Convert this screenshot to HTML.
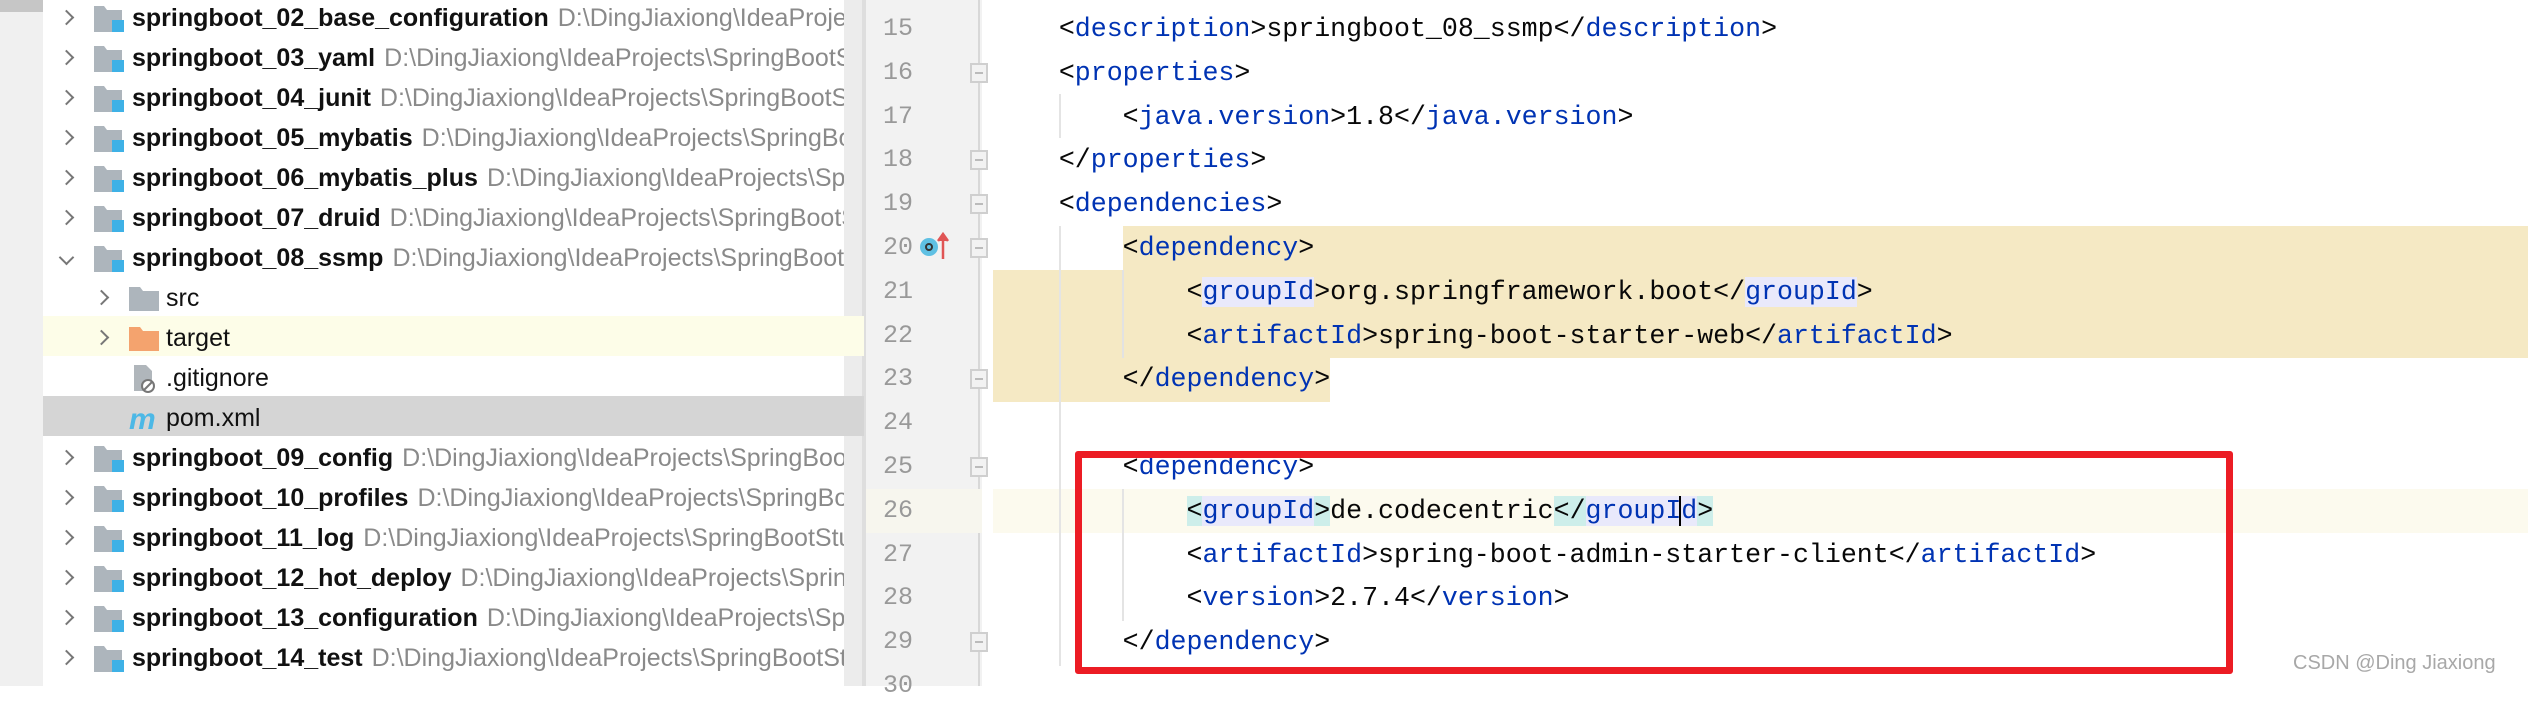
<!DOCTYPE html>
<html><head><meta charset="utf-8"><style>
*{margin:0;padding:0;box-sizing:border-box}
body{width:2528px;height:686px;overflow:hidden;background:#fff;position:relative;font-family:"Liberation Sans",sans-serif}
.abs{position:absolute}
.tr{position:absolute;left:43px;width:821px;height:40px;line-height:40px;font-size:25px;white-space:nowrap;overflow:hidden}
.tr b{color:#111}
.tr .p{color:#8a8a8a;font-weight:normal;margin-left:9px}
.chev{position:absolute;width:11px;height:11px;border-right:2px solid #777;border-bottom:2px solid #777}
.ln{position:absolute;left:850px;width:63px;text-align:right;font-family:"Liberation Mono",monospace;font-size:25px;color:#999;height:44px;line-height:44px}
.code{position:absolute;left:995px;font-family:"Liberation Mono",monospace;font-size:26.6px;height:44px;line-height:44px;white-space:pre;color:#080808}
.t{color:#0033b3}
.lv{background:#e9e9fb}
.cy{background:#cdeeea}
.fold{position:absolute;left:970px;width:18px;height:20px;border:2px solid #cfcfcf;background:#f2f2f2}
</style></head><body>
<div class="abs" style="left:0;top:0;width:43px;height:686px;background:#f0f0f0"></div>
<div class="abs" style="left:0;top:0;width:43px;height:12px;background:#c6c6c6"></div>
<div class="abs" style="left:844px;top:0;width:20px;height:686px;background:#ececec"></div>
<div class="abs" style="left:862px;top:0;width:4px;height:686px;background:#dedede"></div>
<div class="abs" style="left:866px;top:0;width:116px;height:686px;background:#f2f2f2"></div>
<div class="abs" style="left:978px;top:0;width:2px;height:686px;background:#d8d8d8"></div>

<div class="abs" style="left:43px;top:316px;width:821px;height:40px;background:#fdfde8"></div>
<div class="abs" style="left:43px;top:396px;width:821px;height:40px;background:#d5d5d5"></div>

<div id="tree"></div>

<div class="abs" style="left:1123px;top:226px;width:1405px;height:44px;background:#f5e9c4"></div>
<div class="abs" style="left:993px;top:270px;width:1535px;height:88px;background:#f5e9c4"></div>
<div class="abs" style="left:993px;top:358px;width:337px;height:44px;background:#f5e9c4"></div>
<div class="abs" style="left:866px;top:489px;width:116px;height:44px;background:#f7f6ee"></div>
<div class="abs" style="left:993px;top:489px;width:1535px;height:44px;background:#fcfaee"></div>
<div class="abs" style="left:1059px;top:94px;width:2px;height:44px;background:#e4e4e4"></div>
<div class="abs" style="left:1059px;top:226px;width:2px;height:440px;background:#e4e4e4"></div>
<div class="abs" style="left:1122px;top:270px;width:2px;height:88px;background:#e2e2e2"></div>
<div class="abs" style="left:1122px;top:489px;width:2px;height:132px;background:#e4e4e4"></div>

<div id="code"></div>

<div class="abs" style="left:920px;top:238px;width:18px;height:18px;border-radius:50%;background:#5fc0e3"></div>
<div class="abs" style="left:925px;top:243px;width:8px;height:8px;border-radius:50%;border:2px solid #333"></div>
<svg class="abs" style="left:937px;top:232px" width="12" height="28"><path d="M6 27V3M1 9L6 2L11 9" stroke="#e05555" stroke-width="2.5" fill="#e05555"/></svg>

<div class="abs" style="left:1075px;top:451px;width:1158px;height:223px;border:7px solid #ec1c24;border-radius:3px"></div>
<div class="abs" style="left:2293px;top:652px;font-size:20px;color:#a8a8a8;font-family:'Liberation Sans',sans-serif">CSDN @Ding Jiaxiong</div>

<script>
var rows=[["springboot_02_base_configuration","D:\\DingJiaxiong\\IdeaProjects\\SpringBootStudy\\springboot_02_base_configuration",0],
["springboot_03_yaml","D:\\DingJiaxiong\\IdeaProjects\\SpringBootStudy\\springboot_03_yaml",0],
["springboot_04_junit","D:\\DingJiaxiong\\IdeaProjects\\SpringBootStudy\\springboot_04_junit",0],
["springboot_05_mybatis","D:\\DingJiaxiong\\IdeaProjects\\SpringBootStudy",0],
["springboot_06_mybatis_plus","D:\\DingJiaxiong\\IdeaProjects\\SpringBootStudy",0],
["springboot_07_druid","D:\\DingJiaxiong\\IdeaProjects\\SpringBootStudy",0],
["springboot_08_ssmp","D:\\DingJiaxiong\\IdeaProjects\\SpringBootStudy",2],
["src","",10],["target","",11],[".gitignore","",12],["pom.xml","",13],
["springboot_09_config","D:\\DingJiaxiong\\IdeaProjects\\SpringBootStudy",0],
["springboot_10_profiles","D:\\DingJiaxiong\\IdeaProjects\\SpringBootStudy",0],
["springboot_11_log","D:\\DingJiaxiong\\IdeaProjects\\SpringBootStudy",0],
["springboot_12_hot_deploy","D:\\DingJiaxiong\\IdeaProjects\\SpringBootStudy",0],
["springboot_13_configuration","D:\\DingJiaxiong\\IdeaProjects\\SpringBootStudy",0],
["springboot_14_test","D:\\DingJiaxiong\\IdeaProjects\\SpringBootStudy",0]];
var h="";
rows.forEach(function(r,i){var top=-2+40*i,k=r[2];
 if(k<10){
  h+='<div class="chev" style="left:61px;top:'+(top+14)+'px;transform:rotate('+(k==2?45:-45)+'deg)"></div>';
  h+='<svg class="abs" style="left:94px;top:'+(top+8)+'px" width="30" height="26"><path d="M0 0h10l3 4h15v22H0z" fill="#adb5bc"/><rect x="18" y="14" width="12" height="12" fill="#3eb1e6"/></svg>';
  h+='<div class="tr" style="top:'+top+'px;left:132px;width:712px"><b>'+r[0]+'</b><span class="p">'+r[1]+'</span></div>';
 }else{
  if(k<12)h+='<div class="chev" style="left:96px;top:'+(top+14)+'px;transform:rotate(-45deg)"></div>';
  var ic="";
  if(k==10)ic='<path d="M0 2h11l3 4h16v20H0z" fill="#adb5bc"/>';
  if(k==11)ic='<path d="M0 2h11l3 4h16v20H0z" fill="#f4a36e"/>';
  if(k==12)ic='<path d="M5 0h12l6 6v20H5z" fill="#b0b6bb"/><circle cx="19" cy="21" r="6" fill="#fff" stroke="#777" stroke-width="2"/><path d="M15 25l8-8" stroke="#777" stroke-width="2"/>';
  if(k==13)ic='<text x="0" y="24" font-family="Liberation Sans" font-style="italic" font-weight="bold" font-size="30" fill="#4cb8e6">m</text>';
  h+='<svg class="abs" style="left:129px;top:'+(top+7)+'px" width="32" height="28">'+ic+'</svg>';
  h+='<div class="tr" style="top:'+top+'px;left:166px;width:678px"><span style="color:#111">'+r[0]+'</span></div>';
 }});
document.getElementById("tree").innerHTML=h;
function T(s){return '<span class="t">'+s+'</span>'}
var L=[
 '    &lt;'+T('description')+'&gt;springboot_08_ssmp&lt;/'+T('description')+'&gt;',
 '    &lt;'+T('properties')+'&gt;',
 '        &lt;'+T('java.version')+'&gt;1.8&lt;/'+T('java.version')+'&gt;',
 '    &lt;/'+T('properties')+'&gt;',
 '    &lt;'+T('dependencies')+'&gt;',
 '        &lt;'+T('dependency')+'&gt;',
 '            &lt;<span class="t lv">groupId</span>&gt;org.springframework.boot&lt;/<span class="t lv">groupId</span>&gt;',
 '            &lt;'+T('artifactId')+'&gt;spring-boot-starter-web&lt;/'+T('artifactId')+'&gt;',
 '        &lt;/'+T('dependency')+'&gt;',
 '',
 '        &lt;'+T('dependency')+'&gt;',
 '            <span class="cy">&lt;</span><span class="t lv">groupId</span><span class="cy">&gt;</span>de.codecentric<span class="cy">&lt;/</span><span class="t lv">groupI<span style="border-left:2px solid #000;margin-left:-2px">d</span></span><span class="cy">&gt;</span>',
 '            &lt;'+T('artifactId')+'&gt;spring-boot-admin-starter-client&lt;/'+T('artifactId')+'&gt;',
 '            &lt;'+T('version')+'&gt;2.7.4&lt;/'+T('version')+'&gt;',
 '        &lt;/'+T('dependency')+'&gt;',
 ''];
var c="";var folds={16:1,18:1,19:1,20:1,23:1,25:1,29:1};
L.forEach(function(s,i){var n=15+i,top=7+43.8*i;
 c+='<div class="ln" style="top:'+top+'px">'+n+'</div>';
 c+='<div class="code" style="top:'+top+'px">'+s+'</div>';
 if(folds[n])c+='<div class="fold" style="top:'+(top+12)+'px"><div style="position:absolute;left:3px;top:7px;width:8px;height:2px;background:#bbb"></div></div>';
});
document.getElementById("code").innerHTML=c;
</script>
</body></html>
